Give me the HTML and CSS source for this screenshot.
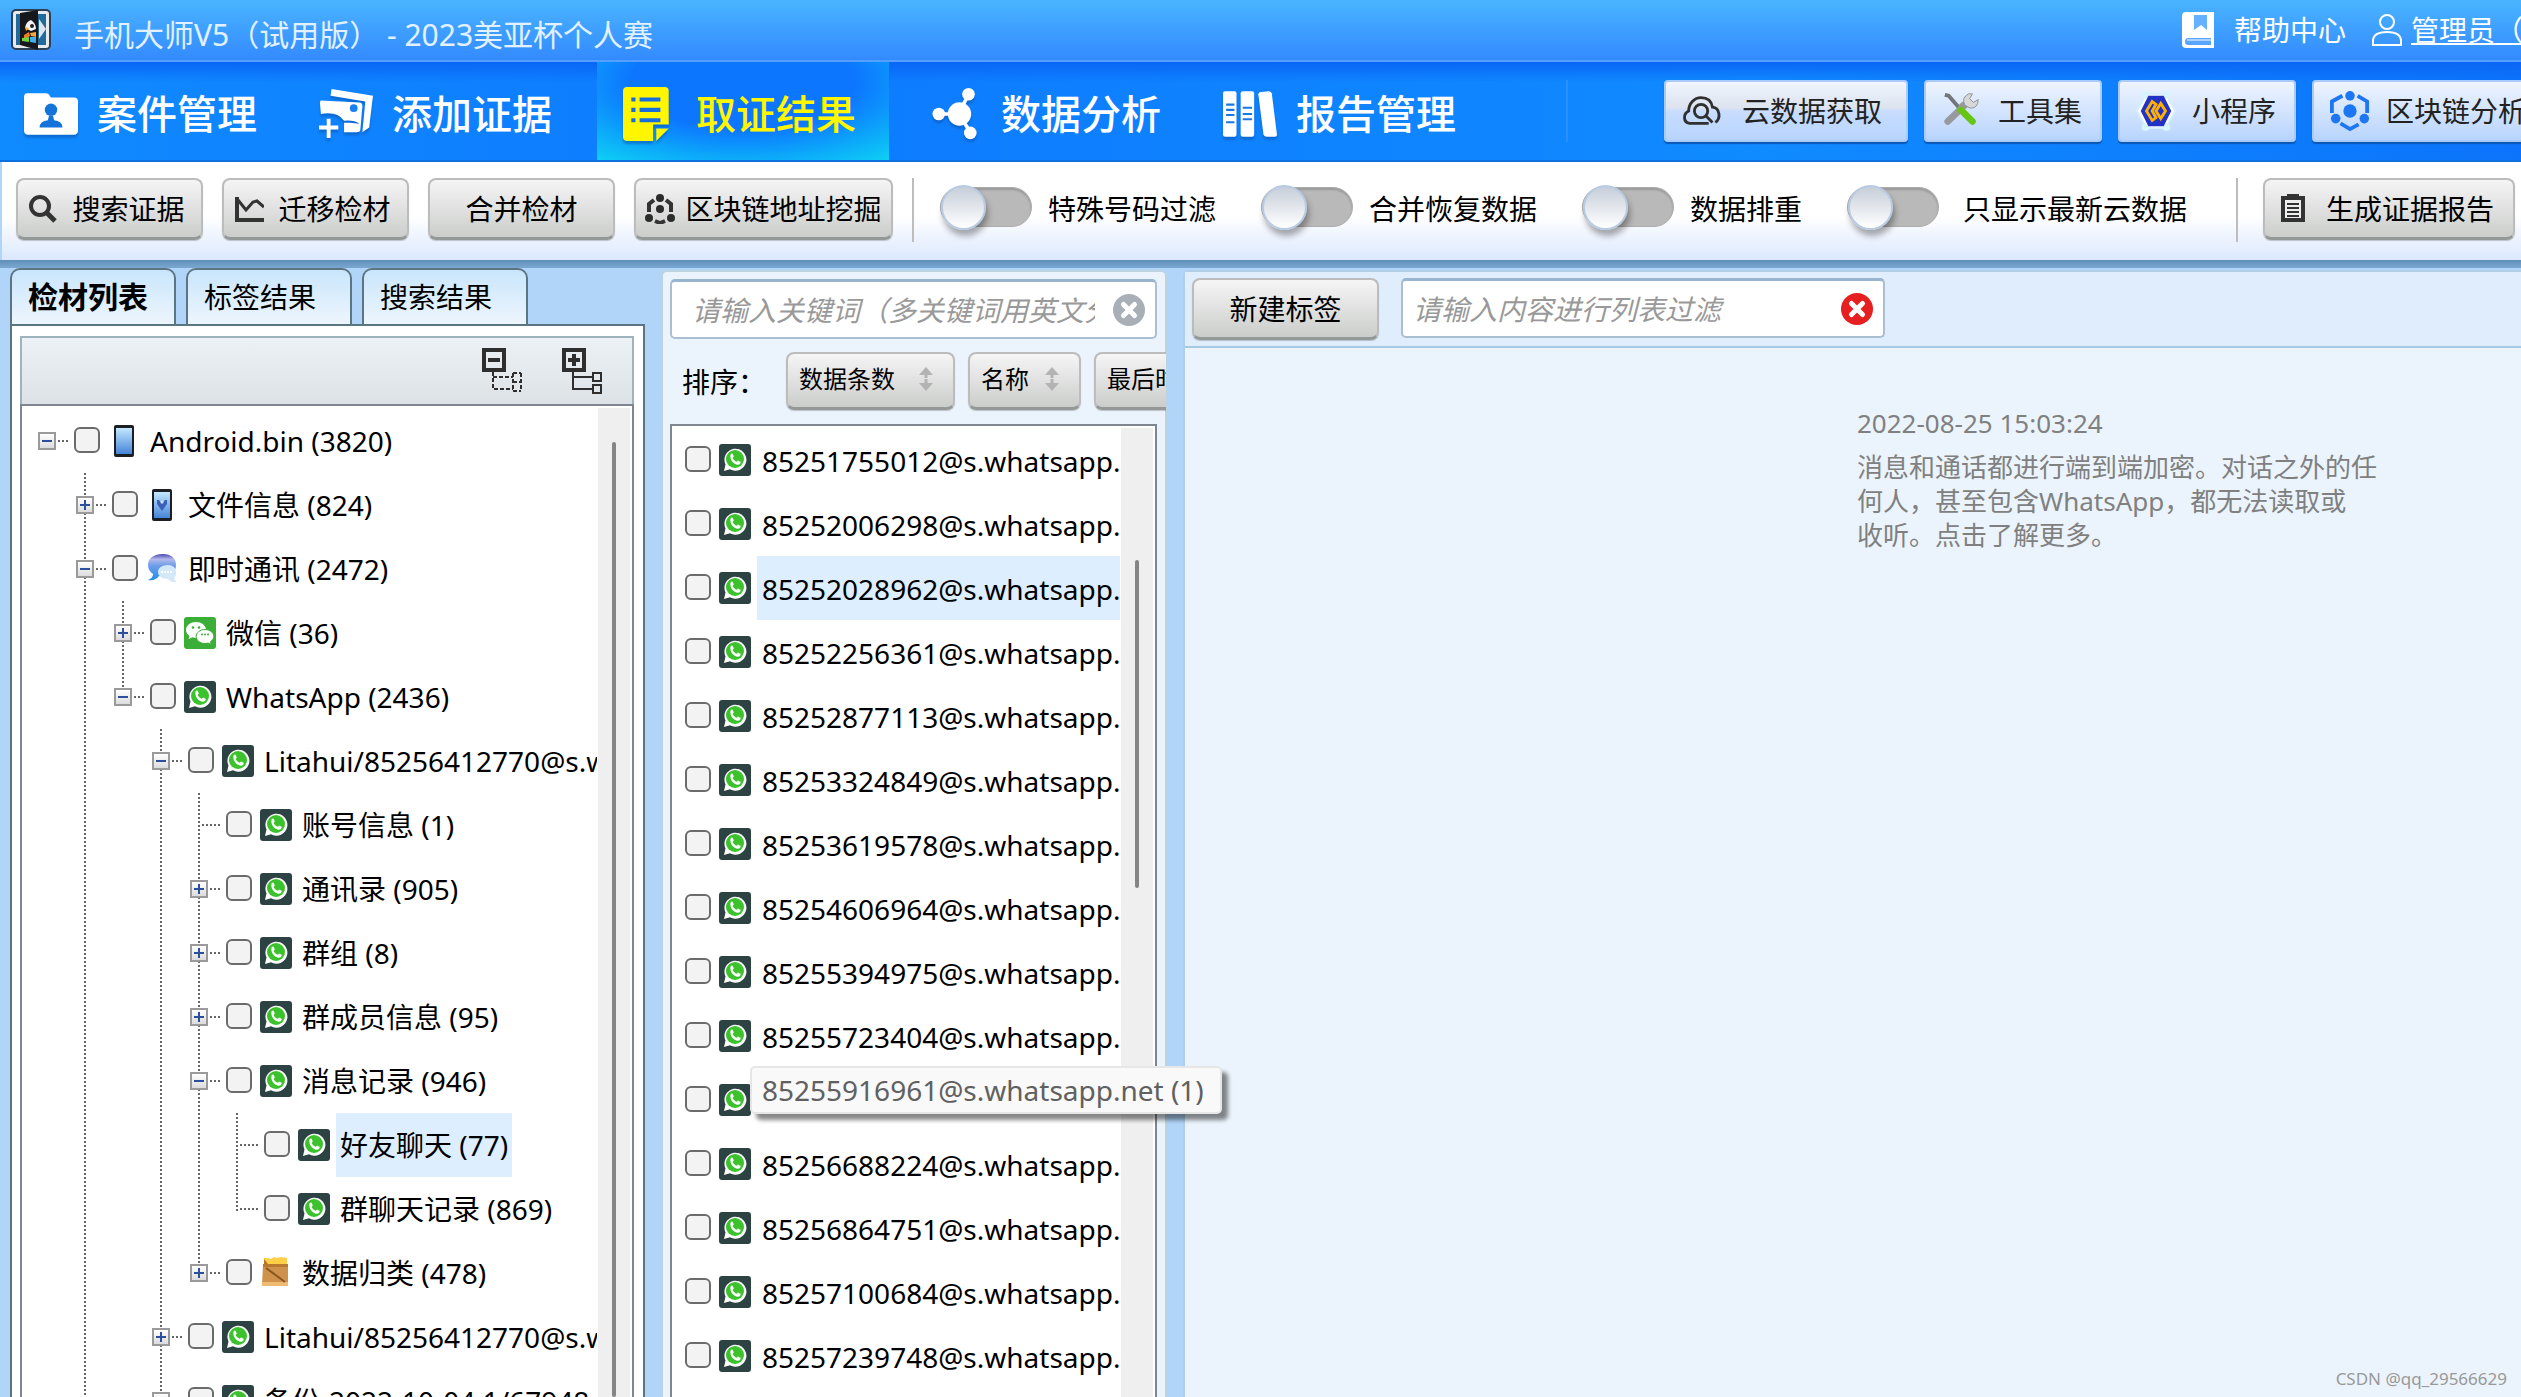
FILE: index.html
```html
<!DOCTYPE html>
<html lang="zh-CN">
<head>
<meta charset="utf-8">
<title>手机大师V5（试用版） - 2023美亚杯个人赛</title>
<link rel="stylesheet" href="styles.css">
</head>
<body>
<svg class="symbols" aria-hidden="true">
  <symbol id="whatsapp" viewBox="0 0 32 32">
    <rect width="32" height="32" rx="3" fill="#2d4343"/>
    <path d="M5 27 6.500 20.500A11 11 0 1 1 11 25.300Z" fill="#fff"/>
    <circle cx="16" cy="15" r="9" fill="#3cc22c"/>
    <path d="M11.500 10.500c1-1.500 2-1.300 2.500 0l.8 2-1.200 1.500c1 2 2.200 3 4 3.700l1.500-1.300 2.500 1.300c.5 1.500-1 3-2.600 3-4.500-.3-8.500-5-7.500-10.200Z" fill="#fff"/>
  </symbol>
  <symbol id="wechat" viewBox="0 0 32 32">
    <rect width="32" height="32" rx="3" fill="#3aae36"/>
    <path d="M12 5C6.500 5 2 8.500 2 13c0 2.500 1.500 4.600 3.500 6L4.500 22l4-1.700c1 .4 2.500.6 3.500.6 5.500 0 10-3.500 10-8S17.500 5 12 5Z" fill="#fff"/>
    <path d="M21 12.500c-5 0-8.800 3-8.800 7s3.800 7 8.800 7c1 0 2-.2 3-.5l3.300 1.500-.8-2.800c2-1.300 3.300-3.200 3.300-5.200 0-4-4-7-8.800-7Z" fill="#fff" stroke="#3aae36"/>
    <g fill="#3aae36"><circle cx="9" cy="10.500" r="1.300"/><circle cx="15" cy="10.500" r="1.300"/><circle cx="18" cy="17.500" r="1"/><circle cx="21" cy="17.500" r="1"/><circle cx="24" cy="17.500" r="1"/></g>
  </symbol>
  <symbol id="phone" viewBox="0 0 32 32">
    <rect x="6" width="20" height="32" rx="2" fill="#1b1e22"/>
    <rect x="8" y="3" width="16" height="26" fill="url(#screen)"/>
  </symbol>
  <symbol id="phone-info" viewBox="0 0 32 32">
    <rect x="6" width="20" height="32" rx="2" fill="#1b1e22"/>
    <rect x="8" y="3" width="16" height="26" fill="url(#screen)"/>
    <path d="M16 22 11 15V11h2l3 4 3-4h2v4Z" fill="#3c5fb8"/><circle cx="16" cy="13" r="1.500" fill="#cfe4ff"/>
  </symbol>
  <symbol id="chat" viewBox="0 0 32 32">
    <path d="M17 1C8 1 2 5 2 12c0 4 2 7 5 9 0 3-2 5-5 6 5 1 9-1 11-4h4c8 0 13-4 13-11S25 1 17 1Z" fill="url(#bubble)"/>
    <path d="M22 12c-6 0-10 3-10 7s4 7 10 7l4 3 4 0-2-4c2-2 2-3 2-6 0-4-3-7-8-7Z" fill="#d3e8f8"/>
    <path d="M15 19h11" stroke="#fff" stroke-width="2" stroke-dasharray="2 1"/>
  </symbol>
  <symbol id="crate" viewBox="0 0 32 32">
    <path d="M4 1h4l3 1 3-2 3 1 4-1 6 1v8H4Z" fill="#ffcf4a"/><path d="M4 2v5h4Z" fill="#b57422"/>
    <path d="M3 7h25v22H2Z" fill="#cf924b"/><path d="M3 7h25v3H3Z" fill="#b97830"/>
    <path d="M2 25h26v4H2Z" fill="#f0bb70"/><path d="m6 11 19 14" stroke="#8a5522" stroke-width="2"/>
  </symbol>
  <symbol id="clear" viewBox="0 0 32 32">
    <circle cx="16" cy="16" r="16" fill="currentColor"/><path d="m10.500 10.500 11 11m0-11-11 11" stroke="#fff" stroke-width="5" stroke-linecap="round"/>
  </symbol>
  <symbol id="sort" viewBox="0 0 14 24">
    <path d="M7 0 14 8H8.500v8H14L7 24 0 16h5.500V8H0Z" fill="#b3b3b3"/><path d="M0 11.500h14" stroke="#e3e3e3"/>
  </symbol>
  <linearGradient id="screen" x2="0" y2="1"><stop stop-color="#c3e8ff"/><stop offset="1" stop-color="#4584d8"/></linearGradient>
  <linearGradient id="bubble" x2="0" y2="1"><stop stop-color="#4646b5"/><stop offset=".2" stop-color="#b3b9e8"/><stop offset=".45" stop-color="#6d9ceb"/><stop offset="1" stop-color="#1f8fe8"/></linearGradient>
</svg>

<header class="titlebar">
  <svg class="app-logo" viewBox="0 0 40 42">
    <rect x="1" y="1" width="38" height="39" rx="4" fill="#e8eaec" stroke="#2b3f55" stroke-width="2"/>
    <rect x="5" y="5" width="30" height="31" fill="#236a9c"/><path d="m9 4 18-3v40L9 36Z" fill="#16181b"/>
    <path d="m28 10 7 10-7 10Z" fill="#dfe5ea"/>
    <path d="M14 19c1-5 3-7 6-8 3 2 5 5 5 9l-5 2Z" fill="#f4f4f4"/><circle cx="21" cy="17" r="2" fill="#222"/>
    <path d="m14 18 4 1-3 3Z" fill="#ffb52a"/>
    <path d="m13 26 5-3 1 4-6 4Z" fill="#ef7b28"/><path d="m19 24 6-1v5l-5-1Z" fill="#f3a63a"/><path d="m11 29 7-1v5l-7-1Z" fill="#79d23c"/><path d="m19 28 6 0v6l-6-1Z" fill="#42aef0"/>
  </svg>
  <h1 class="app-title">手机大师V5（试用版） - 2023美亚杯个人赛</h1>
  <nav class="account">
    <a class="help" href="#help">
      <svg class="book" viewBox="0 0 32 36"><path d="M4 0H32V36H4Q0 36 0 32V4Q0 0 4 0Z" fill="#fff"/><path d="M12 3h13v15l-6-5-7 5Z" fill="#64b2ff"/><path d="M6 26h23v7H6Q3 33 3 30Q3 26 6 26Z" fill="#58a6ff"/><path d="M5 28h24" stroke="#fff"/></svg>
      帮助中心</a>
    <a class="user" href="#user">
      <svg class="person" viewBox="0 0 30 32" fill="none" stroke="#fff" stroke-width="2"><circle cx="15" cy="8" r="7"/><path d="M1 31v-4c0-6 5-9 14-9s14 3 14 9v4Z"/></svg>
      <span>管理员（</span></a>
  </nav>
</header>

<div class="navbar">
  <nav class="main-nav">
    <a class="nav-item first" href="#case">
      <svg viewBox="0 0 52 52"><path d="M3 6H21q3 0 4 3l1 1H48q4 0 4 4V42q0 4-4 4H4q-4 0-4-4V10q0-4 3-4Z" fill="#fff"/><circle cx="26" cy="22" r="6" fill="#1473d8"/><path d="M15 39q0-6 8-7l1-4h4l1 4q8 1 8 7Z" fill="#1473d8"/></svg>
      <span>案件管理</span></a>
    <a class="nav-item" href="#add">
      <svg viewBox="0 0 56 52"><path d="m13 0 43 7-4 33-7 5 3-32L12 7Z" fill="#fff"/><path d="M2 12 42 14q3 0 3 4L43 41q0 4-4 4H26V35h6l10 1q-6-4-16-3-7-10-24-7L1 15q0-3 1-3Z" fill="#fff"/><circle cx="36" cy="20" r="4" fill="#1980f2"/><path d="M10 31v20M0 40h20" stroke="#fff" stroke-width="4"/></svg>
      <span>添加证据</span></a>
    <a class="nav-item active" href="#result" aria-current="page">
      <svg viewBox="0 0 52 52"><path d="M4 0H40q4 0 4 4V36H29V52H4q-4 0-4-4V4q0-4 4-4Z" fill="#fff600"/><path d="M32 40H44L32 52Z" fill="#fff600"/><g stroke="#176ddd" stroke-width="4"><path d="M8 12h4m4 0h20M8 22h4m4 0h20M8 32h4m4 0h20"/></g></svg>
      <span>取证结果</span></a>
    <a class="nav-item" href="#analysis">
      <svg viewBox="0 0 52 60"><path d="M8 30h22L41 8M30 30 43 50" stroke="#fff" stroke-width="4" fill="none"/><circle cx="8" cy="30" r="7" fill="#fff"/><circle cx="31" cy="30" r="13" fill="#fff"/><circle cx="41" cy="8" r="7" fill="#fff"/><circle cx="43" cy="51" r="7" fill="#fff"/></svg>
      <span>数据分析</span></a>
    <a class="nav-item" href="#report">
      <svg viewBox="0 0 52 52"><rect y="4" width="13" height="44" rx="2" fill="#fff"/><rect x="17" y="4" width="13" height="44" rx="2" fill="#fff"/><path d="m35 5 9-1q2 0 3 2l5 40q0 2-2 2l-8 0q-2 0-3-2L34 7Z" fill="#fff"/><path d="M3 17h8M3 22h8M3 27h8M3 34h8M19 20h9M19 26h9M19 31h9" stroke="#1977e0" stroke-width="2"/></svg>
      <span>报告管理</span></a>
  </nav>
  <div class="tools">
    <button class="tool cloud" type="button">
      <svg viewBox="0 0 42 40" fill="none" stroke="#303030" stroke-width="3"><path d="M11 33H8C1 32 1 23 7 20 7 12 13 6 20 6c7 0 11 4 12 10 8 1 9 12 3 16M10 33h18"/><circle cx="20" cy="20" r="7"/><path d="m25 25 7 7"/></svg>
      云数据获取</button>
    <button class="tool" type="button">
      <svg viewBox="0 0 42 40"><path d="m3 3 4 1 13 15" stroke="#727579" stroke-width="4" fill="none"/><path d="m19 16 4-4" stroke="#999" stroke-width="5"/><path d="m27 11-21 20" stroke="#97999c" stroke-width="7" stroke-linecap="round"/><path d="M24 14q-4-8 4-12l4 0-3 5 4 4 5-3q0 9-8 9Z" fill="#d8d8d8" stroke="#8d8f92"/><path d="m20 19 12 12" stroke="#67c513" stroke-width="7" stroke-linecap="round"/></svg>
      工具集</button>
    <button class="tool" type="button">
      <svg viewBox="0 0 42 42"><path d="M11 3h20l10 18-10 18H11L1 21Z" fill="#fff" stroke="#d4f0ff" stroke-width="2"/><g fill="#d7f5ff"><circle cx="10" cy="4" r="4"/><circle cx="32" cy="4" r="4"/><circle cx="10" cy="38" r="4"/><circle cx="32" cy="38" r="4"/></g><path d="M13 5h16l8 16-8 16H13L5 21Z" fill="#2232c4"/><path d="m17 11-6 10 6 10 4-3-4-7 4-7Zm9 2 5 8-5 8-5-8Z" fill="none" stroke="#ffb000" stroke-width="3"/></svg>
      小程序</button>
    <button class="tool wide" type="button">
      <svg viewBox="0 0 42 42" fill="none" stroke="#1d76f2" stroke-width="4"><path d="M2 23V11L13 5M29 5l10 6v12M11 34l10 6 9-5"/><g fill="#1d76f2" stroke="none"><circle cx="21" cy="21" r="7"/><circle cx="21" cy="5" r="5"/><circle cx="6" cy="29" r="5"/><circle cx="36" cy="29" r="5"/></g></svg>
      区块链分析</button>
  </div>
</div>

<div class="toolbar">
  <button class="btn with-icon" type="button">
    <svg viewBox="0 0 30 30" fill="none" stroke="#333"><circle cx="12" cy="12" r="9" stroke-width="4"/><path d="m18 18 9 9" stroke-width="5"/></svg>搜索证据</button>
  <button class="btn with-icon" type="button">
    <svg viewBox="0 0 30 30" fill="none" stroke="#333" stroke-width="4"><path d="M3 3v23h27"/><path d="m4 6 8 10 7-8 4-1 7 6" stroke-width="3"/></svg>迁移检材</button>
  <button class="btn plain" type="button">合并检材</button>
  <button class="btn with-icon chain" type="button">
    <svg viewBox="0 0 30 30"><path d="M4 18V10L9 6M21 6l5 4v8M10 27l5 2 5-2" fill="none" stroke="#333" stroke-width="4"/><g fill="#2c2c2c"><circle cx="15" cy="4" r="4"/><circle cx="15" cy="15" r="4"/><circle cx="4" cy="24" r="4"/><circle cx="26" cy="24" r="4"/></g></svg>区块链地址挖掘</button>
  <span class="divider"></span>
  <div class="switches">
    <label class="switch"><input type="checkbox">特殊号码过滤</label>
    <label class="switch"><input type="checkbox">合并恢复数据</label>
    <label class="switch"><input type="checkbox">数据排重</label>
    <label class="switch roomy"><input type="checkbox">只显示最新云数据</label>
  </div>
  <span class="divider"></span>
  <button class="btn with-icon report" type="button">
    <svg viewBox="0 0 30 30"><path d="M3 2H9V0h12v2h6V28H3Z" fill="#333"/><path d="M7 6h16v18H7Z" fill="#eee"/><path d="M9 10h12M9 14h12M9 18h12M9 22h12" stroke="#333" stroke-width="2"/></svg>生成证据报告</button>
</div>

<main class="workspace">
  <section class="evidence">
    <div class="tabs" role="tablist">
      <button class="tab selected" role="tab" aria-selected="true" type="button">检材列表</button>
      <button class="tab" role="tab" type="button">标签结果</button>
      <button class="tab" role="tab" type="button">搜索结果</button>
    </div>
    <div class="evidence-body">
      <div class="tree-tools">
        <button type="button" aria-label="全部折叠"><svg viewBox="0 0 40 46" fill="none" stroke="#2e2e2e"><rect x="2" y="2" width="20" height="20" stroke-width="4"/><path d="M6 12h12" stroke-width="4"/><path d="M11 24v17h20M11 29h20M31 25v18M39 25v18M31 25h8M31 34h8M31 43h8" stroke-width="2" stroke-dasharray="4 2"/></svg></button>
        <button type="button" aria-label="全部展开"><svg viewBox="0 0 40 46" fill="none" stroke="#2e2e2e"><rect x="2" y="2" width="20" height="20" stroke-width="4"/><path d="M6 12h12M12 6v12" stroke-width="4"/><path d="M11 24v17h20M11 29h20M31 25h8v8h-8ZM31 37h8v8h-8Z" stroke-width="2"/></svg></button>
      </div>
      <div class="tree-box">
        <ul class="tree">
          <li>
            <div class="node"><button class="toggle minus" type="button" aria-label="折叠"></button><label><input type="checkbox"><svg><use href="#phone"/></svg><span>Android.bin (3820)</span></label></div>
            <ul>
              <li><div class="node"><button class="toggle" type="button" aria-label="展开"></button><label><input type="checkbox"><svg><use href="#phone-info"/></svg><span>文件信息 (824)</span></label></div></li>
              <li class="continues">
                <div class="node"><button class="toggle minus" type="button" aria-label="折叠"></button><label><input type="checkbox"><svg><use href="#chat"/></svg><span>即时通讯 (2472)</span></label></div>
                <ul>
                  <li><div class="node"><button class="toggle" type="button" aria-label="展开"></button><label><input type="checkbox"><svg><use href="#wechat"/></svg><span>微信 (36)</span></label></div></li>
                  <li>
                    <div class="node"><button class="toggle minus" type="button" aria-label="折叠"></button><label><input type="checkbox"><svg><use href="#whatsapp"/></svg><span>WhatsApp (2436)</span></label></div>
                    <ul>
                      <li>
                        <div class="node"><button class="toggle minus" type="button" aria-label="折叠"></button><label><input type="checkbox"><svg><use href="#whatsapp"/></svg><span>Litahui/85256412770@s.w</span></label></div>
                        <ul>
                          <li><div class="node leaf"><label><input type="checkbox"><svg><use href="#whatsapp"/></svg><span>账号信息 (1)</span></label></div></li>
                          <li><div class="node"><button class="toggle" type="button" aria-label="展开"></button><label><input type="checkbox"><svg><use href="#whatsapp"/></svg><span>通讯录 (905)</span></label></div></li>
                          <li><div class="node"><button class="toggle" type="button" aria-label="展开"></button><label><input type="checkbox"><svg><use href="#whatsapp"/></svg><span>群组 (8)</span></label></div></li>
                          <li><div class="node"><button class="toggle" type="button" aria-label="展开"></button><label><input type="checkbox"><svg><use href="#whatsapp"/></svg><span>群成员信息 (95)</span></label></div></li>
                          <li>
                            <div class="node"><button class="toggle minus" type="button" aria-label="折叠"></button><label><input type="checkbox"><svg><use href="#whatsapp"/></svg><span>消息记录 (946)</span></label></div>
                            <ul>
                              <li><div class="node leaf current"><label><input type="checkbox"><svg><use href="#whatsapp"/></svg><span>好友聊天 (77)</span></label></div></li>
                              <li><div class="node leaf"><label><input type="checkbox"><svg><use href="#whatsapp"/></svg><span>群聊天记录 (869)</span></label></div></li>
                            </ul>
                          </li>
                          <li><div class="node"><button class="toggle" type="button" aria-label="展开"></button><label><input type="checkbox"><svg><use href="#crate"/></svg><span>数据归类 (478)</span></label></div></li>
                        </ul>
                      </li>
                      <li><div class="node"><button class="toggle" type="button" aria-label="展开"></button><label><input type="checkbox"><svg><use href="#whatsapp"/></svg><span>Litahui/85256412770@s.w</span></label></div></li>
                      <li><div class="node"><button class="toggle minus" type="button" aria-label="折叠"></button><label><input type="checkbox"><svg><use href="#whatsapp"/></svg><span>备份-2022-10-04.1/67948</span></label></div></li>
                    </ul>
                  </li>
                </ul>
              </li>
            </ul>
          </li>
        </ul>
        <div class="scroll tree-scroll"><i></i></div>
      </div>
    </div>
  </section>

  <section class="contacts">
    <div class="field">
      <input type="text" placeholder="请输入关键词（多关键词用英文分号隔开）" aria-label="关键词">
      <button class="clear" type="button" aria-label="清除"><svg><use href="#clear"/></svg></button>
    </div>
    <div class="sort-row">
      <span>排序：</span>
      <button class="btn sort" type="button">数据条数<svg><use href="#sort"/></svg></button>
      <button class="btn sort" type="button">名称<svg><use href="#sort"/></svg></button>
      <button class="btn sort" type="button">最后时间<svg><use href="#sort"/></svg></button>
    </div>
    <div class="contact-box">
      <ul class="contact-list">
        <li><label><input type="checkbox"><svg><use href="#whatsapp"/></svg><span>85251755012@s.whatsapp.</span></label></li>
        <li><label><input type="checkbox"><svg><use href="#whatsapp"/></svg><span>85252006298@s.whatsapp.</span></label></li>
        <li class="current"><label><input type="checkbox"><svg><use href="#whatsapp"/></svg><span>85252028962@s.whatsapp.</span></label></li>
        <li><label><input type="checkbox"><svg><use href="#whatsapp"/></svg><span>85252256361@s.whatsapp.</span></label></li>
        <li><label><input type="checkbox"><svg><use href="#whatsapp"/></svg><span>85252877113@s.whatsapp.</span></label></li>
        <li><label><input type="checkbox"><svg><use href="#whatsapp"/></svg><span>85253324849@s.whatsapp.</span></label></li>
        <li><label><input type="checkbox"><svg><use href="#whatsapp"/></svg><span>85253619578@s.whatsapp.</span></label></li>
        <li><label><input type="checkbox"><svg><use href="#whatsapp"/></svg><span>85254606964@s.whatsapp.</span></label></li>
        <li><label><input type="checkbox"><svg><use href="#whatsapp"/></svg><span>85255394975@s.whatsapp.</span></label></li>
        <li><label><input type="checkbox"><svg><use href="#whatsapp"/></svg><span>85255723404@s.whatsapp.</span></label></li>
        <li><label><input type="checkbox" aria-label="85255916961"><svg><use href="#whatsapp"/></svg></label><div class="tooltip" role="tooltip">85255916961@s.whatsapp.net (1)</div></li>
        <li><label><input type="checkbox"><svg><use href="#whatsapp"/></svg><span>85256688224@s.whatsapp.</span></label></li>
        <li><label><input type="checkbox"><svg><use href="#whatsapp"/></svg><span>85256864751@s.whatsapp.</span></label></li>
        <li><label><input type="checkbox"><svg><use href="#whatsapp"/></svg><span>85257100684@s.whatsapp.</span></label></li>
        <li><label><input type="checkbox"><svg><use href="#whatsapp"/></svg><span>85257239748@s.whatsapp.</span></label></li>
      </ul>
      <div class="scroll contact-scroll"><i></i></div>
    </div>
  </section>

  <section class="messages">
    <div class="message-tools">
      <button class="btn plain" type="button">新建标签</button>
      <div class="field">
        <input type="text" placeholder="请输入内容进行列表过滤" aria-label="列表过滤">
        <button class="clear red" type="button" aria-label="清除"><svg><use href="#clear"/></svg></button>
      </div>
    </div>
    <article class="notice">
      <time>2022-08-25 15:03:24</time>
      <p>消息和通话都进行端到端加密。对话之外的任何人，甚至包含WhatsApp，都无法读取或<br>收听。点击了解更多。</p>
    </article>
    <small class="credit">CSDN @qq_29566629</small>
  </section>
</main>
</body>
</html>
```
FILE: styles.css
```css
* { box-sizing: border-box; }

body {
  margin: 0;
  height: 100vh;
  display: flex;
  flex-direction: column;
  overflow: hidden;
  background: #b0d5f8;
  color: #000;
  font: 28px/40px "Noto Sans", "Noto Sans CJK SC", sans-serif;
}

button, input { font: inherit; color: inherit; margin: 0; }
button { cursor: pointer; padding: 0; white-space: nowrap; }
a { color: inherit; text-decoration: none; }
ul { list-style: none; margin: 0; padding: 0; }
svg { display: block; flex: none; }
.symbols { position: absolute; width: 0; height: 0; }

/* Title bar */
.titlebar {
  flex: none;
  height: 62px;
  display: flex;
  align-items: center;
  padding-left: 11px;
  border-bottom: 2px solid #559fff;
  background: linear-gradient(#4ab4ff, #338aff);
  color: #fff;
}
.app-logo { width: 40px; height: 42px; }
.app-title {
  flex: 1;
  margin: 10px 0 0 23px;
  font-size: 30px;
  font-weight: 400;
  color: #e2f1ff;
  white-space: nowrap;
}
.account { flex: none; width: 339px; display: flex; gap: 26px; white-space: nowrap; }
.help, .user { flex: none; display: flex; align-items: center; }
.help { gap: 20px; }
.user { gap: 9px; }
.user span { text-decoration: underline; text-underline-offset: 2px; text-decoration-thickness: 2px; }
.book { width: 32px; height: 36px; }
.person { width: 30px; height: 32px; }

/* Main navigation */
.navbar {
  flex: none;
  height: 100px;
  display: flex;
  border-bottom: 2px solid #0b6fe0;
  background:
    linear-gradient(#0a66f5, transparent 20px),
    linear-gradient(90deg, #108aff, #0d7bff 30%, #108aff 70%, #0c74fb);
}
.main-nav { flex: none; width: 1566px; display: flex; color: #fff; font-size: 40px; font-weight: 500; }
.nav-item { display: flex; align-items: center; gap: 19px; padding: 5px 31px 0; white-space: nowrap; }
.nav-item svg { width: 54px; height: 54px; filter: drop-shadow(0 3px 1px #0a4fa680); }
.nav-item.first { padding-left: 24px; }
.nav-item.active {
  margin: 0 8px 0 14px;
  padding: 5px 33px 0 26px;
  color: #fff600;
  background: radial-gradient(ellipse 64% 80% at 50% 20%, #0d76ff 60%, #0ca6fa 95%, #0ed4f4 130%);
}
.tools {
  flex: 1;
  min-width: 0;
  display: flex;
  align-items: center;
  gap: 16px;
  margin: 18px 0;
  padding-left: 96px;
  border-left: 2px solid #2c8eff;
}
.tool {
  flex: none;
  width: 178px;
  height: 62px;
  display: flex;
  align-items: center;
  gap: 16px;
  padding-left: 16px;
  border: 2px solid #a8cbfb;
  border-radius: 4px;
  background: linear-gradient(#eef4ff, #b8d4fd);
  box-shadow: 0 2px 1px #0a57b4;
  color: #222;
}
.tool svg { width: 40px; height: 42px; }
.tool.cloud { width: 244px; gap: 20px; background: linear-gradient(#f0f5ff, #dce3ee 45%, #c8ddff 50%, #b8d4fd); }
.tool.wide { width: 264px; }

/* Toolbar */
.toolbar {
  flex: none;
  height: 98px;
  margin-left: 2px;
  padding: 16px 6px 0 14px;
  display: flex;
  align-items: flex-start;
  gap: 19px;
  background: linear-gradient(#fff 55%, #dbe9fd);
}
.btn {
  flex: none;
  height: 62px;
  display: flex;
  align-items: center;
  justify-content: center;
  border: 2px solid #bcbcbc;
  border-bottom: 3px solid #949896;
  border-radius: 8px;
  background: linear-gradient(#f5f5f5, #cbcdcb);
  box-shadow: 0 1px 1px #0003;
}
.plain { width: 187px; }
.with-icon { width: 187px; padding-right: 6px; gap: 14px; }
.with-icon svg { width: 30px; height: 30px; }
.chain { width: 259px; padding-right: 0; gap: 10px; }
.report { width: 252px; gap: 18px; margin-left: 6px; }
.divider { flex: none; width: 2px; height: 64px; background: #bdbdbd; }
.switches { flex: 1; display: flex; gap: 45px; padding-left: 7px; }
.switch { flex: none; display: flex; align-items: center; gap: 16px; height: 62px; }
.roomy { gap: 24px; }
.switch input {
  appearance: none;
  width: 92px;
  height: 40px;
  margin-bottom: 4px;
  border-radius: 20px;
  border: 1px solid #adadad;
  background: #b9b9b9;
  box-shadow: inset 0 2px 2px #999;
  display: flex;
  align-items: center;
}
.switch input::before {
  content: "";
  width: 41px;
  height: 41px;
  border: 2px solid #b9cbe2;
  border-radius: 50%;
  background: linear-gradient(#c6ced9, #fff);
  box-shadow: 2px 6px 6px #0005;
}

/* Workspace */
.workspace {
  flex: 1;
  min-height: 0;
  display: flex;
  gap: 16px;
  padding: 8px 0 0 10px;
  background: linear-gradient(#5f8fb8, #7ba8d2 8px, transparent 8px);
}
.evidence { flex: none; width: 635px; display: flex; flex-direction: column; }
.tabs { flex: none; display: flex; gap: 10px; height: 56px; }
.tab {
  width: 166px;
  padding: 0 24px 0 16px;
  text-align: left;
  border: 2px solid #5c7583;
  border-bottom: 0;
  border-radius: 10px 10px 0 0;
  background: linear-gradient(#c9e6fc, #edf5fd);
}
.tab.selected { font-weight: 700; font-size: 30px; padding-right: 0; }
.evidence-body {
  flex: 1;
  min-height: 0;
  display: flex;
  flex-direction: column;
  padding: 10px 9px 0 8px;
  border: 2px solid #5c7583;
  border-bottom: 0;
  background: #fff;
}
.tree-tools {
  flex: none;
  height: 68px;
  display: flex;
  justify-content: flex-end;
  gap: 40px;
  padding: 10px 30px 0 0;
  border: 2px solid #9fb3bd;
  border-bottom: 0;
  background: linear-gradient(#ebf1f4, #dde2e7);
}
.tree-tools button { border: 0; background: none; align-self: flex-start; }
.tree-tools svg { width: 40px; height: 46px; }
.tree-box, .contact-box {
  flex: 1;
  min-height: 0;
  display: flex;
  gap: 1px;
  border: 2px solid #80868f;
  border-bottom: 0;
  background: #fff;
  padding: 2px 2px 0 0;
}
.tree { flex: 1; min-width: 0; overflow: hidden; padding: 1px 0 0 16px; }
.tree ul { padding-left: 38px; }
.tree ul > li {
  background: repeating-linear-gradient(#666 0 2px, transparent 2px 4px) 8px 0 / 2px 100% no-repeat;
}
.tree ul > li:last-child:not(.continues) { background-size: 2px 34px; }
.node { height: 64px; display: flex; align-items: center; }
.toggle {
  flex: none;
  width: 18px;
  height: 18px;
  border: 2px solid #9a9a9a;
  background:
    linear-gradient(#2b4f9e, #2b4f9e) center / 10px 2px no-repeat,
    linear-gradient(#2b4f9e, #2b4f9e) center / 2px 10px no-repeat,
    linear-gradient(#fff, #dcdcdc);
}
.toggle.minus {
  background:
    linear-gradient(#2b4f9e, #2b4f9e) center / 10px 2px no-repeat,
    linear-gradient(#fff, #dcdcdc);
}
.node label, .contact-list label { display: flex; align-items: center; height: 100%; white-space: nowrap; }
.node label::before {
  content: "";
  width: 10px;
  height: 2px;
  margin: 0 6px 0 2px;
  background: repeating-linear-gradient(90deg, #666 0 2px, transparent 2px 4px);
}
.node.leaf label::before { width: 18px; margin-left: 12px; }
.node label svg, .contact-list svg { width: 32px; height: 32px; margin-left: 8px; }
.node label span {
  height: 100%;
  margin-left: 6px;
  padding: 0 4px;
  line-height: 64px;
}
label input:not(.switch input) {
  appearance: none;
  flex: none;
  width: 26px;
  height: 26px;
  margin-bottom: 3px;
  border: 2px solid #6b6b6b;
  border-radius: 6px;
  background: #f3f3f3;
}
.current span { background: #dceeff; }

.scroll { flex: none; width: 32px; background: #efefef; display: flex; justify-content: center; }
.scroll i { width: 4px; border-radius: 2px; background: #858585; }
.tree-scroll i { margin-top: 34px; }
.contact-scroll i { height: 328px; margin-top: 132px; }

/* Contacts */
.contacts {
  flex: none;
  width: 506px;
  margin-top: 2px;
  display: flex;
  flex-direction: column;
  padding: 7px 8px 0 7px;
  border: 2px solid #bcd3e0;
  border-bottom: 0;
  border-radius: 6px 6px 0 0;
  background: #ebf4fc;
}
.field {
  flex: none;
  height: 60px;
  display: flex;
  align-items: center;
  gap: 18px;
  padding: 0 10px 0 20px;
  border: 2px solid #abbfd1;
  border-top: 3px solid #98b4cf;
  border-radius: 5px;
  background: #fff;
}
.field input {
  flex: 1;
  min-width: 0;
  padding: 0;
  border: 0;
  outline: 0;
  background: none;
  font-style: italic;
}
.field input::placeholder { color: #999; opacity: 1; }
.clear { flex: none; border: 0; background: none; color: #a9afb6; }
.clear svg { width: 32px; height: 32px; }
.clear.red { color: #e62020; }
.sort-row {
  flex: none;
  display: flex;
  gap: 13px;
  margin: 13px -9px 12px 0;
  padding-left: 12px;
  overflow: hidden;
}
.sort-row span { flex: none; width: 91px; line-height: 60px; white-space: nowrap; }
.sort { height: 58px; gap: 24px; padding: 0 20px 4px 11px; font-size: 24px; }
.sort svg { width: 14px; height: 24px; }
.sort:nth-of-type(2) { gap: 16px; }
.contact-list { flex: 1; min-width: 0; }
.contact-list li { position: relative; height: 64px; padding-left: 13px; }
.contact-list label span {
  flex: 1;
  height: 100%;
  margin-left: 6px;
  padding-left: 5px;
  line-height: 66px;
}
.tooltip {
  position: absolute;
  z-index: 1;
  left: 78px;
  top: -2px;
  width: max-content;
  padding: 2px 16px 2px 10px;
  border: 2px solid #e6e6e6;
  border-radius: 5px;
  background: #f9f9f9;
  box-shadow: 6px 6px 4px #0007;
  color: #606060;
}

/* Messages */
.messages {
  flex: 1;
  min-width: 0;
  margin-top: 2px;
  border: 2px solid #b0cfe6;
  border-width: 2px 0 0 2px;
  border-radius: 6px 0 0 0;
  background: #ebf4fc;
}
.message-tools {
  display: flex;
  gap: 22px;
  padding: 6px 7px;
  border-bottom: 2px solid #a6c9e4;
  background: #e0edfd;
}
.message-tools .field { width: 484px; padding-left: 10px; }
.notice {
  width: 530px;
  margin: 58px 0 0 672px;
  font-size: 26px;
  line-height: 34px;
  color: #808080;
}
.notice time { display: block; margin-bottom: 10px; }
.notice p { margin: 0; }
.credit {
  position: absolute;
  right: 14px;
  bottom: 5px;
  font-size: 17px;
  line-height: 26px;
  color: #999;
}
```
